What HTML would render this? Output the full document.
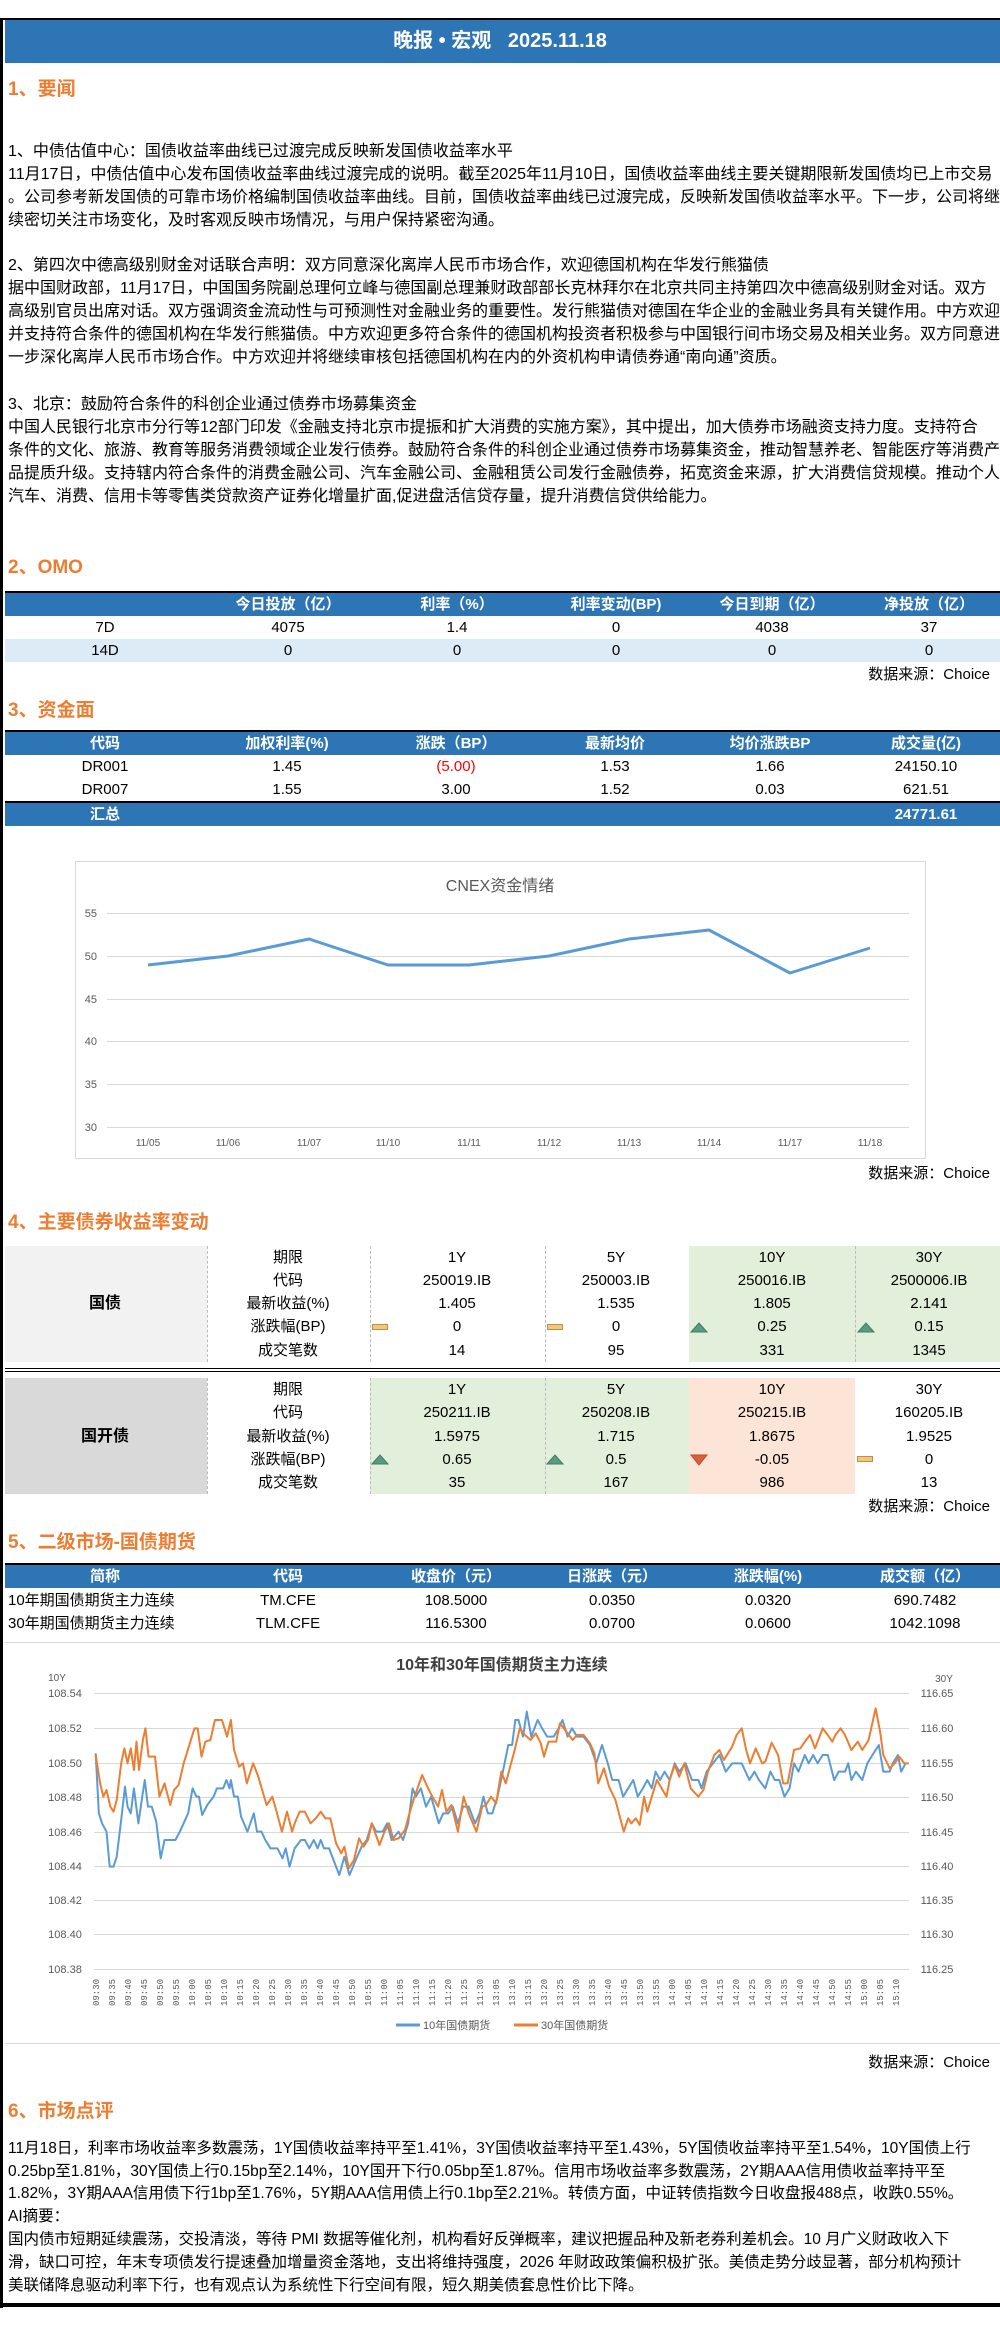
<!DOCTYPE html>
<html><head><meta charset="utf-8"><style>
*{margin:0;padding:0;box-sizing:border-box}
body{width:1000px;height:2325px;position:relative;overflow:hidden;background:#fff;font-family:"Liberation Sans","Noto Sans CJK SC",sans-serif;color:#000;font-size:15px}
.a{position:absolute;white-space:nowrap}
.h{position:absolute;left:8px;font-size:19px;font-weight:bold;color:#ed7d31;line-height:24px}
.p{position:absolute;left:8px;font-size:15.5px;line-height:23px;white-space:nowrap}
.p1{font-size:16px}
.bar{position:absolute;left:5px;right:0;background:#2e75b6}
.c{position:absolute;text-align:center;width:200px;margin-left:-100px;line-height:23px;white-space:nowrap}
.w{color:#fff;font-weight:bold}
.src{position:absolute;right:10px;font-size:15px;line-height:20px}
.bl{position:absolute;left:5px;right:0;background:#000}
.dv{position:absolute;border-left:1px dashed #bbb}
</style></head><body>
<!-- frame -->
<div class="a" style="left:0;top:18px;width:1000px;height:2px;background:#000"></div>
<div class="a" style="left:0;top:18px;width:3px;height:2290px;background:#000"></div>
<div class="a" style="left:3px;top:2303px;width:997px;height:4px;background:#000"></div>
<div class="a" style="left:5px;top:20px;width:995px;height:43px;background:#2e75b6"></div>
<div class="a w" style="left:0;width:1000px;top:28px;text-align:center;font-size:20px;line-height:26px">晚报 • 宏观 &nbsp; 2025.11.18</div>

<div class="h" style="top:78px">1、要闻</div>
<div class="p p1" style="top:140px">1、中债估值中心：国债收益率曲线已过渡完成反映新发国债收益率水平</div>
<div class="p p1" style="top:163px">11月17日，中债估值中心发布国债收益率曲线过渡完成的说明。截至2025年11月10日，国债收益率曲线主要关键期限新发国债均已上市交易</div>
<div class="p p1" style="top:186px">。公司参考新发国债的可靠市场价格编制国债收益率曲线。目前，国债收益率曲线已过渡完成，反映新发国债收益率水平。下一步，公司将继</div>
<div class="p p1" style="top:209px">续密切关注市场变化，及时客观反映市场情况，与用户保持紧密沟通。</div>
<div class="p p1" style="top:254px">2、第四次中德高级别财金对话联合声明：双方同意深化离岸人民币市场合作，欢迎德国机构在华发行熊猫债</div>
<div class="p p1" style="top:277px">据中国财政部，11月17日，中国国务院副总理何立峰与德国副总理兼财政部部长克林拜尔在北京共同主持第四次中德高级别财金对话。双方</div>
<div class="p p1" style="top:300px">高级别官员出席对话。双方强调资金流动性与可预测性对金融业务的重要性。发行熊猫债对德国在华企业的金融业务具有关键作用。中方欢迎</div>
<div class="p p1" style="top:323px">并支持符合条件的德国机构在华发行熊猫债。中方欢迎更多符合条件的德国机构投资者积极参与中国银行间市场交易及相关业务。双方同意进</div>
<div class="p p1" style="top:346px">一步深化离岸人民币市场合作。中方欢迎并将继续审核包括德国机构在内的外资机构申请债券通“南向通”资质。</div>
<div class="p p1" style="top:393px">3、北京：鼓励符合条件的科创企业通过债券市场募集资金</div>
<div class="p p1" style="top:416px">中国人民银行北京市分行等12部门印发《金融支持北京市提振和扩大消费的实施方案》，其中提出，加大债券市场融资支持力度。支持符合</div>
<div class="p p1" style="top:439px">条件的文化、旅游、教育等服务消费领域企业发行债券。鼓励符合条件的科创企业通过债券市场募集资金，推动智慧养老、智能医疗等消费产</div>
<div class="p p1" style="top:462px">品提质升级。支持辖内符合条件的消费金融公司、汽车金融公司、金融租赁公司发行金融债券，拓宽资金来源，扩大消费信贷规模。推动个人</div>
<div class="p p1" style="top:485px">汽车、消费、信用卡等零售类贷款资产证券化增量扩面,促进盘活信贷存量，提升消费信贷供给能力。</div>

<!-- OMO -->
<div class="h" style="top:556px">2、OMO</div>
<div class="bl" style="top:591px;height:2px"></div>
<div class="bar" style="top:593px;height:23px"></div>
<div class="bar" style="top:639px;height:23px;background:#ddebf7"></div>
<div class="c w" style="left:288px;top:593px">今日投放（亿）</div>
<div class="c w" style="left:457px;top:593px">利率（%）</div>
<div class="c w" style="left:616px;top:593px">利率变动(BP)</div>
<div class="c w" style="left:772px;top:593px">今日到期（亿）</div>
<div class="c w" style="left:929px;top:593px">净投放（亿）</div>
<div class="c" style="left:105px;top:616px">7D</div><div class="c" style="left:288px;top:616px">4075</div><div class="c" style="left:457px;top:616px">1.4</div><div class="c" style="left:616px;top:616px">0</div><div class="c" style="left:772px;top:616px">4038</div><div class="c" style="left:929px;top:616px">37</div>
<div class="c" style="left:105px;top:639px">14D</div><div class="c" style="left:288px;top:639px">0</div><div class="c" style="left:457px;top:639px">0</div><div class="c" style="left:616px;top:639px">0</div><div class="c" style="left:772px;top:639px">0</div><div class="c" style="left:929px;top:639px">0</div>
<div class="src" style="top:665px">数据来源：Choice</div>

<!-- 资金面 -->
<div class="h" style="top:699px">3、资金面</div>
<div class="bl" style="top:730px;height:2px"></div>
<div class="bar" style="top:732px;height:23px"></div>
<div class="c w" style="left:105px;top:732px">代码</div><div class="c w" style="left:287px;top:732px">加权利率(%)</div><div class="c w" style="left:456px;top:732px">涨跌（BP）</div><div class="c w" style="left:615px;top:732px">最新均价</div><div class="c w" style="left:770px;top:732px">均价涨跌BP</div><div class="c w" style="left:926px;top:732px">成交量(亿)</div>
<div class="c" style="left:105px;top:755px">DR001</div><div class="c" style="left:287px;top:755px">1.45</div><div class="c" style="left:456px;top:755px;color:#f00">(5.00)</div><div class="c" style="left:615px;top:755px">1.53</div><div class="c" style="left:770px;top:755px">1.66</div><div class="c" style="left:926px;top:755px">24150.10</div>
<div class="c" style="left:105px;top:778px">DR007</div><div class="c" style="left:287px;top:778px">1.55</div><div class="c" style="left:456px;top:778px">3.00</div><div class="c" style="left:615px;top:778px">1.52</div><div class="c" style="left:770px;top:778px">0.03</div><div class="c" style="left:926px;top:778px">621.51</div>
<div class="bl" style="top:801px;height:2px"></div>
<div class="bar" style="top:803px;height:23px"></div>
<div class="c w" style="left:105px;top:803px">汇总</div><div class="c w" style="left:926px;top:803px">24771.61</div>

<!-- CNEX chart -->
<svg class="a" style="left:0;top:0" width="1000" height="1200">
<rect x="75.5" y="861.5" width="850" height="297" fill="#fff" stroke="#d9d9d9"/>
<text x="500" y="891" text-anchor="middle" font-size="16" fill="#595959" font-family="Liberation Sans,Noto Sans CJK SC,sans-serif">CNEX资金情绪</text>
<g stroke="#d9d9d9" stroke-width="1">
<line x1="107" x2="909" y1="913.5" y2="913.5"/><line x1="107" x2="909" y1="956.5" y2="956.5"/><line x1="107" x2="909" y1="999.5" y2="999.5"/><line x1="107" x2="909" y1="1041.5" y2="1041.5"/><line x1="107" x2="909" y1="1084.5" y2="1084.5"/><line x1="107" x2="909" y1="1127.5" y2="1127.5"/></g>
<g font-size="11" fill="#595959" text-anchor="end" font-family="Liberation Sans,sans-serif">
<text x="97" y="917">55</text><text x="97" y="960">50</text><text x="97" y="1003">45</text><text x="97" y="1045">40</text><text x="97" y="1088">35</text><text x="97" y="1131">30</text></g>
<g font-size="10" fill="#595959" text-anchor="middle" font-family="Liberation Sans,sans-serif">
<text x="148" y="1146">11/05</text><text x="228" y="1146">11/06</text><text x="309" y="1146">11/07</text><text x="388" y="1146">11/10</text><text x="469" y="1146">11/11</text><text x="549" y="1146">11/12</text><text x="629" y="1146">11/13</text><text x="709" y="1146">11/14</text><text x="790" y="1146">11/17</text><text x="870" y="1146">11/18</text></g>
<polyline fill="none" stroke="#5b9bd5" stroke-width="3" stroke-linejoin="round" points="148,965 228,956 309,939 388,965 469,965 549,956 629,939 709,930 790,973 870,948"/>
</svg>
<div class="src" style="top:1164px">数据来源：Choice</div>

<!-- 4 -->
<div class="h" style="top:1211px">4、主要债券收益率变动</div>
<div class="a" style="left:5px;top:1246px;width:202px;height:116px;background:#f2f2f2"></div>
<div class="a" style="left:689px;top:1246px;width:311px;height:116px;background:#e2efda"></div>
<div class="dv" style="left:207px;top:1246px;height:116px"></div><div class="dv" style="left:370px;top:1246px;height:116px"></div><div class="dv" style="left:545px;top:1246px;height:116px"></div><div class="dv" style="left:855px;top:1246px;height:116px"></div>
<div class="a" style="left:5px;top:1368px;width:995px;height:1px;background:#000"></div>
<div class="a" style="left:5px;top:1371px;width:995px;height:1px;background:#000"></div>
<div class="a" style="left:5px;top:1378px;width:202px;height:116px;background:#d9d9d9"></div>
<div class="a" style="left:370px;top:1378px;width:319px;height:116px;background:#e2efda"></div>
<div class="a" style="left:689px;top:1378px;width:166px;height:116px;background:#fce4d6"></div>
<div class="dv" style="left:207px;top:1378px;height:116px"></div><div class="dv" style="left:370px;top:1378px;height:116px"></div><div class="dv" style="left:545px;top:1378px;height:116px"></div>
<div class="c" style="left:105px;top:1292px;font-weight:bold;font-size:16px">国债</div>
<div class="c" style="left:105px;top:1425px;font-weight:bold;font-size:16px">国开债</div>
<div class="c" style="left:288px;top:1246px">期限</div><div class="c" style="left:288px;top:1269px">代码</div><div class="c" style="left:288px;top:1292px">最新收益(%)</div><div class="c" style="left:288px;top:1315px">涨跌幅(BP)</div><div class="c" style="left:288px;top:1339px">成交笔数</div>
<div class="c" style="left:457px;top:1246px">1Y</div><div class="c" style="left:457px;top:1269px">250019.IB</div><div class="c" style="left:457px;top:1292px">1.405</div><div class="c" style="left:457px;top:1315px">0</div><div class="c" style="left:457px;top:1339px">14</div>
<div class="c" style="left:616px;top:1246px">5Y</div><div class="c" style="left:616px;top:1269px">250003.IB</div><div class="c" style="left:616px;top:1292px">1.535</div><div class="c" style="left:616px;top:1315px">0</div><div class="c" style="left:616px;top:1339px">95</div>
<div class="c" style="left:772px;top:1246px">10Y</div><div class="c" style="left:772px;top:1269px">250016.IB</div><div class="c" style="left:772px;top:1292px">1.805</div><div class="c" style="left:772px;top:1315px">0.25</div><div class="c" style="left:772px;top:1339px">331</div>
<div class="c" style="left:929px;top:1246px">30Y</div><div class="c" style="left:929px;top:1269px">2500006.IB</div><div class="c" style="left:929px;top:1292px">2.141</div><div class="c" style="left:929px;top:1315px">0.15</div><div class="c" style="left:929px;top:1339px">1345</div>
<div class="c" style="left:288px;top:1378px">期限</div><div class="c" style="left:288px;top:1401px">代码</div><div class="c" style="left:288px;top:1425px">最新收益(%)</div><div class="c" style="left:288px;top:1448px">涨跌幅(BP)</div><div class="c" style="left:288px;top:1471px">成交笔数</div>
<div class="c" style="left:457px;top:1378px">1Y</div><div class="c" style="left:457px;top:1401px">250211.IB</div><div class="c" style="left:457px;top:1425px">1.5975</div><div class="c" style="left:457px;top:1448px">0.65</div><div class="c" style="left:457px;top:1471px">35</div>
<div class="c" style="left:616px;top:1378px">5Y</div><div class="c" style="left:616px;top:1401px">250208.IB</div><div class="c" style="left:616px;top:1425px">1.715</div><div class="c" style="left:616px;top:1448px">0.5</div><div class="c" style="left:616px;top:1471px">167</div>
<div class="c" style="left:772px;top:1378px">10Y</div><div class="c" style="left:772px;top:1401px">250215.IB</div><div class="c" style="left:772px;top:1425px">1.8675</div><div class="c" style="left:772px;top:1448px">-0.05</div><div class="c" style="left:772px;top:1471px">986</div>
<div class="c" style="left:929px;top:1378px">30Y</div><div class="c" style="left:929px;top:1401px">160205.IB</div><div class="c" style="left:929px;top:1425px">1.9525</div><div class="c" style="left:929px;top:1448px">0</div><div class="c" style="left:929px;top:1471px">13</div>
<svg class="a" style="left:0;top:1300px" width="1000" height="180">
<rect x="372.5" y="24.5" width="15" height="5" fill="#f2c77a" stroke="#b8914a"/>
<rect x="547.5" y="24.5" width="15" height="5" fill="#f2c77a" stroke="#b8914a"/>
<path d="M691 32 L699 23 L707 32Z" fill="#5a9a7e" stroke="#3f7d62"/>
<path d="M858 32 L866 23 L874 32Z" fill="#5a9a7e" stroke="#3f7d62"/>
<path d="M372 164 L380 155 L388 164Z" fill="#5a9a7e" stroke="#3f7d62"/>
<path d="M547 164 L555 155 L563 164Z" fill="#5a9a7e" stroke="#3f7d62"/>
<path d="M691 155 L707 155 L699 165Z" fill="#d9603b" stroke="#b84a2a"/>
<rect x="857.5" y="156.5" width="15" height="5" fill="#f2c77a" stroke="#b8914a"/>
</svg>
<div class="src" style="top:1497px">数据来源：Choice</div>

<!-- 5 -->
<div class="h" style="top:1531px">5、二级市场-国债期货</div>
<div class="bl" style="top:1563px;height:2px"></div>
<div class="bar" style="top:1565px;height:23px"></div>
<div class="c w" style="left:105px;top:1565px">简称</div><div class="c w" style="left:288px;top:1565px">代码</div><div class="c w" style="left:456px;top:1565px">收盘价（元）</div><div class="c w" style="left:612px;top:1565px">日涨跌（元）</div><div class="c w" style="left:768px;top:1565px">涨跌幅(%)</div><div class="c w" style="left:925px;top:1565px">成交额（亿）</div>
<div class="a" style="left:8px;top:1589px;line-height:23px">10年期国债期货主力连续</div><div class="c" style="left:288px;top:1589px">TM.CFE</div><div class="c" style="left:456px;top:1589px">108.5000</div><div class="c" style="left:612px;top:1589px">0.0350</div><div class="c" style="left:768px;top:1589px">0.0320</div><div class="c" style="left:925px;top:1589px">690.7482</div>
<div class="a" style="left:8px;top:1612px;line-height:23px">30年期国债期货主力连续</div><div class="c" style="left:288px;top:1612px">TLM.CFE</div><div class="c" style="left:456px;top:1612px">116.5300</div><div class="c" style="left:612px;top:1612px">0.0700</div><div class="c" style="left:768px;top:1612px">0.0600</div><div class="c" style="left:925px;top:1612px">1042.1098</div>

<!-- futures chart -->
<div class="a" style="left:5px;top:1642px;width:995px;height:1px;background:#d9d9d9"></div>
<div class="a" style="left:5px;top:2043px;width:995px;height:1px;background:#d9d9d9"></div>
<svg class="a" style="left:0;top:1640px" width="1000" height="410" font-family="Liberation Sans,Noto Sans CJK SC,sans-serif">
<text x="502" y="30" text-anchor="middle" font-size="16" font-weight="bold" fill="#404040">10年和30年国债期货主力连续</text>
<text x="57" y="41" text-anchor="middle" font-size="10" fill="#595959">10Y</text>
<text x="944" y="42" text-anchor="middle" font-size="10" fill="#595959">30Y</text>
<g stroke="#d9d9d9"><line x1="94" x2="909" y1="53.5" y2="53.5"/><line x1="94" x2="909" y1="88.5" y2="88.5"/><line x1="94" x2="909" y1="123.5" y2="123.5"/><line x1="94" x2="909" y1="157.5" y2="157.5"/><line x1="94" x2="909" y1="192.5" y2="192.5"/><line x1="94" x2="909" y1="226.5" y2="226.5"/><line x1="94" x2="909" y1="260.5" y2="260.5"/><line x1="94" x2="909" y1="294.5" y2="294.5"/><line x1="94" x2="909" y1="329.5" y2="329.5"/></g>
<g font-size="11" fill="#595959" text-anchor="middle">
<text x="65" y="57">108.54</text><text x="65" y="92">108.52</text><text x="65" y="127">108.50</text><text x="65" y="161">108.48</text><text x="65" y="196">108.46</text><text x="65" y="230">108.44</text><text x="65" y="264">108.42</text><text x="65" y="298">108.40</text><text x="65" y="333">108.38</text>
<text x="937" y="57">116.65</text><text x="937" y="92">116.60</text><text x="937" y="127">116.55</text><text x="937" y="161">116.50</text><text x="937" y="196">116.45</text><text x="937" y="230">116.40</text><text x="937" y="264">116.35</text><text x="937" y="298">116.30</text><text x="937" y="333">116.25</text></g>
<g font-size="9" fill="#595959" font-family="Liberation Mono,monospace">
<text transform="translate(99,366) rotate(-90)">09:30</text><text transform="translate(115,366) rotate(-90)">09:35</text><text transform="translate(131,366) rotate(-90)">09:40</text><text transform="translate(147,366) rotate(-90)">09:45</text><text transform="translate(163,366) rotate(-90)">09:50</text><text transform="translate(179,366) rotate(-90)">09:55</text><text transform="translate(195,366) rotate(-90)">10:00</text><text transform="translate(211,366) rotate(-90)">10:05</text><text transform="translate(227,366) rotate(-90)">10:10</text><text transform="translate(243,366) rotate(-90)">10:15</text><text transform="translate(259,366) rotate(-90)">10:20</text><text transform="translate(275,366) rotate(-90)">10:25</text><text transform="translate(291,366) rotate(-90)">10:30</text><text transform="translate(307,366) rotate(-90)">10:35</text><text transform="translate(323,366) rotate(-90)">10:40</text><text transform="translate(339,366) rotate(-90)">10:45</text><text transform="translate(355,366) rotate(-90)">10:50</text><text transform="translate(371,366) rotate(-90)">10:55</text><text transform="translate(387,366) rotate(-90)">11:00</text><text transform="translate(403,366) rotate(-90)">11:05</text><text transform="translate(419,366) rotate(-90)">11:10</text><text transform="translate(435,366) rotate(-90)">11:15</text><text transform="translate(451,366) rotate(-90)">11:20</text><text transform="translate(467,366) rotate(-90)">11:25</text><text transform="translate(483,366) rotate(-90)">11:30</text><text transform="translate(499,366) rotate(-90)">13:05</text><text transform="translate(515,366) rotate(-90)">13:10</text><text transform="translate(531,366) rotate(-90)">13:15</text><text transform="translate(547,366) rotate(-90)">13:20</text><text transform="translate(563,366) rotate(-90)">13:25</text><text transform="translate(579,366) rotate(-90)">13:30</text><text transform="translate(595,366) rotate(-90)">13:35</text><text transform="translate(611,366) rotate(-90)">13:40</text><text transform="translate(627,366) rotate(-90)">13:45</text><text transform="translate(643,366) rotate(-90)">13:50</text><text transform="translate(659,366) rotate(-90)">13:55</text><text transform="translate(675,366) rotate(-90)">14:00</text><text transform="translate(691,366) rotate(-90)">14:05</text><text transform="translate(707,366) rotate(-90)">14:10</text><text transform="translate(723,366) rotate(-90)">14:15</text><text transform="translate(739,366) rotate(-90)">14:20</text><text transform="translate(755,366) rotate(-90)">14:25</text><text transform="translate(771,366) rotate(-90)">14:30</text><text transform="translate(787,366) rotate(-90)">14:35</text><text transform="translate(803,366) rotate(-90)">14:40</text><text transform="translate(819,366) rotate(-90)">14:45</text><text transform="translate(835,366) rotate(-90)">14:50</text><text transform="translate(851,366) rotate(-90)">14:55</text><text transform="translate(867,366) rotate(-90)">15:00</text><text transform="translate(883,366) rotate(-90)">15:05</text><text transform="translate(899,366) rotate(-90)">15:10</text></g>
<line x1="396" x2="420" y1="385" y2="385" stroke="#5b9bd5" stroke-width="3"/><text x="423" y="389" font-size="11" fill="#595959">10年国债期货</text>
<line x1="514" x2="538" y1="385" y2="385" stroke="#ed7d31" stroke-width="3"/><text x="541" y="389" font-size="11" fill="#595959">30年国债期货</text>
</svg>
<svg class="a" style="left:0;top:1640px" width="1000" height="460" viewBox="0 0 1568 1380" preserveAspectRatio="none">
<polyline fill="none" stroke="#5b9bd5" stroke-width="2" vector-effect="non-scaling-stroke" stroke-linejoin="round" points="150,340 155,520 160,550 167,575 172,680 178,680 183,650 190,540 196,440 200,500 205,520 210,445 217,550 223,470 227,420 232,500 238,500 245,545 252,655 258,600 275,600 282,575 295,520 302,445 308,470 312,470 317,525 325,495 335,470 340,445 350,445 355,420 360,445 362,420 367,470 373,470 378,530 388,575 398,520 403,575 410,575 416,600 424,625 435,625 443,655 448,625 454,680 462,625 472,600 478,600 485,625 492,600 498,625 503,600 508,625 516,625 532,705 540,650 548,705 560,650 567,620 575,600 583,550 590,575 600,575 607,550 614,600 625,575 632,600 640,550 647,445 652,470 660,445 668,500 676,470 688,550 695,520 703,520 710,500 718,550 726,500 735,500 745,550 752,520 758,470 765,520 772,520 780,470 788,400 797,315 803,315 808,240 813,240 820,290 826,215 833,290 843,240 850,265 858,290 868,290 876,265 882,240 890,290 897,265 905,290 915,290 925,315 935,370 944,315 953,370 960,420 970,420 977,470 985,445 993,420 1000,470 1008,445 1015,420 1022,445 1028,395 1035,420 1042,395 1050,420 1058,370 1065,395 1075,370 1085,420 1095,420 1100,445 1108,395 1118,370 1128,345 1138,395 1148,370 1163,370 1175,420 1183,395 1190,420 1200,445 1208,395 1215,420 1222,420 1230,470 1238,445 1245,370 1252,395 1262,345 1268,370 1275,345 1282,370 1290,345 1298,345 1308,420 1315,395 1325,395 1330,370 1335,420 1342,395 1352,420 1360,370 1368,345 1378,315 1385,395 1395,395 1400,370 1408,345 1413,395 1420,370"/>
<polyline fill="none" stroke="#ed7d31" stroke-width="2" vector-effect="non-scaling-stroke" stroke-linejoin="round" points="150,345 157,430 162,470 167,450 173,500 178,515 183,480 190,370 195,325 200,370 205,325 210,390 214,305 218,390 224,300 228,265 233,350 243,350 250,470 258,430 267,495 273,450 280,435 288,370 296,320 305,265 310,265 316,350 322,305 330,300 337,240 348,240 356,290 362,240 367,330 375,380 381,370 387,430 397,370 405,410 418,495 427,470 433,510 442,575 450,515 458,575 463,545 470,515 478,515 487,550 495,535 503,515 510,535 518,535 527,610 535,640 540,620 547,685 555,660 563,595 570,620 577,600 583,550 595,615 603,575 610,550 617,600 625,595 635,570 642,520 650,470 662,405 670,440 678,470 687,500 693,450 700,515 708,495 718,575 727,470 735,520 747,575 756,500 762,495 770,470 778,490 786,395 793,430 800,380 807,330 815,265 823,285 832,300 840,280 848,310 853,350 860,305 872,305 878,250 888,275 898,300 905,285 915,285 925,310 932,340 938,430 947,385 955,440 965,480 978,575 985,535 990,550 997,535 1003,555 1010,470 1015,515 1022,470 1030,420 1045,470 1050,420 1058,375 1065,410 1073,370 1083,445 1095,470 1103,450 1110,395 1120,345 1128,330 1135,360 1148,320 1155,285 1163,265 1170,330 1176,370 1185,325 1195,370 1200,365 1210,308 1220,345 1228,430 1235,430 1245,330 1255,325 1262,305 1270,285 1278,325 1290,265 1298,285 1305,305 1310,285 1318,265 1325,285 1335,330 1345,305 1352,330 1362,300 1373,205 1380,275 1385,345 1395,385 1403,370 1410,350 1418,370 1425,370"/>
</svg>
<div class="src" style="top:2053px">数据来源：Choice</div>

<!-- 6 -->
<div class="h" style="top:2100px">6、市场点评</div>
<div class="p" style="top:2137px">11月18日，利率市场收益率多数震荡，1Y国债收益率持平至1.41%，3Y国债收益率持平至1.43%，5Y国债收益率持平至1.54%，10Y国债上行</div>
<div class="p" style="top:2160px">0.25bp至1.81%，30Y国债上行0.15bp至2.14%，10Y国开下行0.05bp至1.87%。信用市场收益率多数震荡，2Y期AAA信用债收益率持平至</div>
<div class="p" style="top:2182px">1.82%，3Y期AAA信用债下行1bp至1.76%，5Y期AAA信用债上行0.1bp至2.21%。转债方面，中证转债指数今日收盘报488点，收跌0.55%。</div>
<div class="p" style="top:2205px">AI摘要：</div>
<div class="p" style="top:2228px">国内债市短期延续震荡，交投清淡，等待 PMI 数据等催化剂，机构看好反弹概率，建议把握品种及新老券利差机会。10 月广义财政收入下</div>
<div class="p" style="top:2251px">滑，缺口可控，年末专项债发行提速叠加增量资金落地，支出将维持强度，2026 年财政政策偏积极扩张。美债走势分歧显著，部分机构预计</div>
<div class="p" style="top:2274px">美联储降息驱动利率下行，也有观点认为系统性下行空间有限，短久期美债套息性价比下降。</div>
</body></html>
